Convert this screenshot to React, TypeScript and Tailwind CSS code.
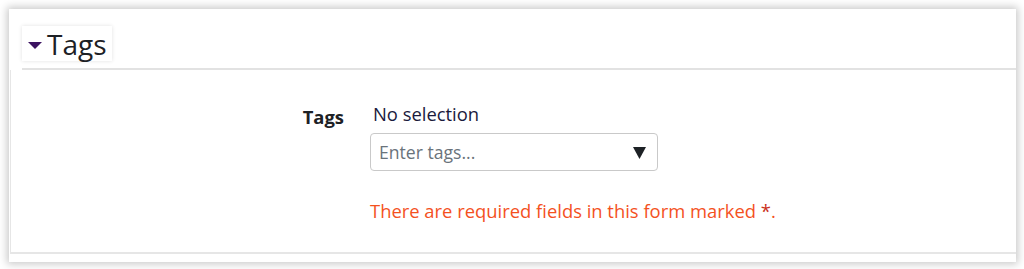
export default function App() {
  return (
    <div className="h-[269px] w-[1024px] bg-white p-[9px] pr-[8px] font-['Open_Sans',sans-serif]">
      <div className="flex h-[253px] flex-col bg-white pb-[8px] shadow-[0_0_8px_2px_rgba(0,0,0,0.22)]">
        <div className="pl-[13px] pt-[17px]">
          <div className="flex h-[35px] w-[90px] items-center gap-[5px] pl-[6px] shadow-[0_0_4px_rgba(0,0,0,0.12)]">
            <svg width="14" height="7" viewBox="0 0 14 7" className="mt-[3px]">
              <polygon points="0,0 14,0 7,7" fill="#3c1361" />
            </svg>
            <span className="text-[28px] leading-none text-[#1d2125]">Tags</span>
          </div>
          <div className="mt-[7px] h-[2px] bg-[#e2e2e2]" />
        </div>
        <div className="ml-[1px] flex flex-1 flex-col border-b-2 border-l border-[#e6e6e6] pl-[359px] pt-[32px]">
          <div className="flex">
            <div className="-ml-[89px] mr-[26px] w-[63px] pt-[3px] text-right text-[18.4px] font-bold leading-[24px] text-[#1d2125]">
              Tags
            </div>
            <div className="flex flex-col">
              <div className="pl-[3px] text-[18.4px] leading-[24px] text-[#1a1a3c]">No selection</div>
              <div className="mt-[7px] flex h-[38px] w-[288px] items-center justify-between rounded-[4px] border border-[#c9c9c9] pl-[8px] pr-[11px]">
                <span className="text-[17.6px] text-[#6a737b]">Enter tags...</span>
                <svg width="13" height="13" viewBox="0 0 13 13">
                  <polygon points="0,1 13,1 6.5,13" fill="#1d2125" />
                </svg>
              </div>
            </div>
          </div>
          <div className="mt-[28px] text-[18.4px] leading-[24px] text-[#f4511e]">
            There are required fields in this form marked <span className="text-[#ca3120]">*</span>.
          </div>
        </div>
      </div>
    </div>
  );
}
